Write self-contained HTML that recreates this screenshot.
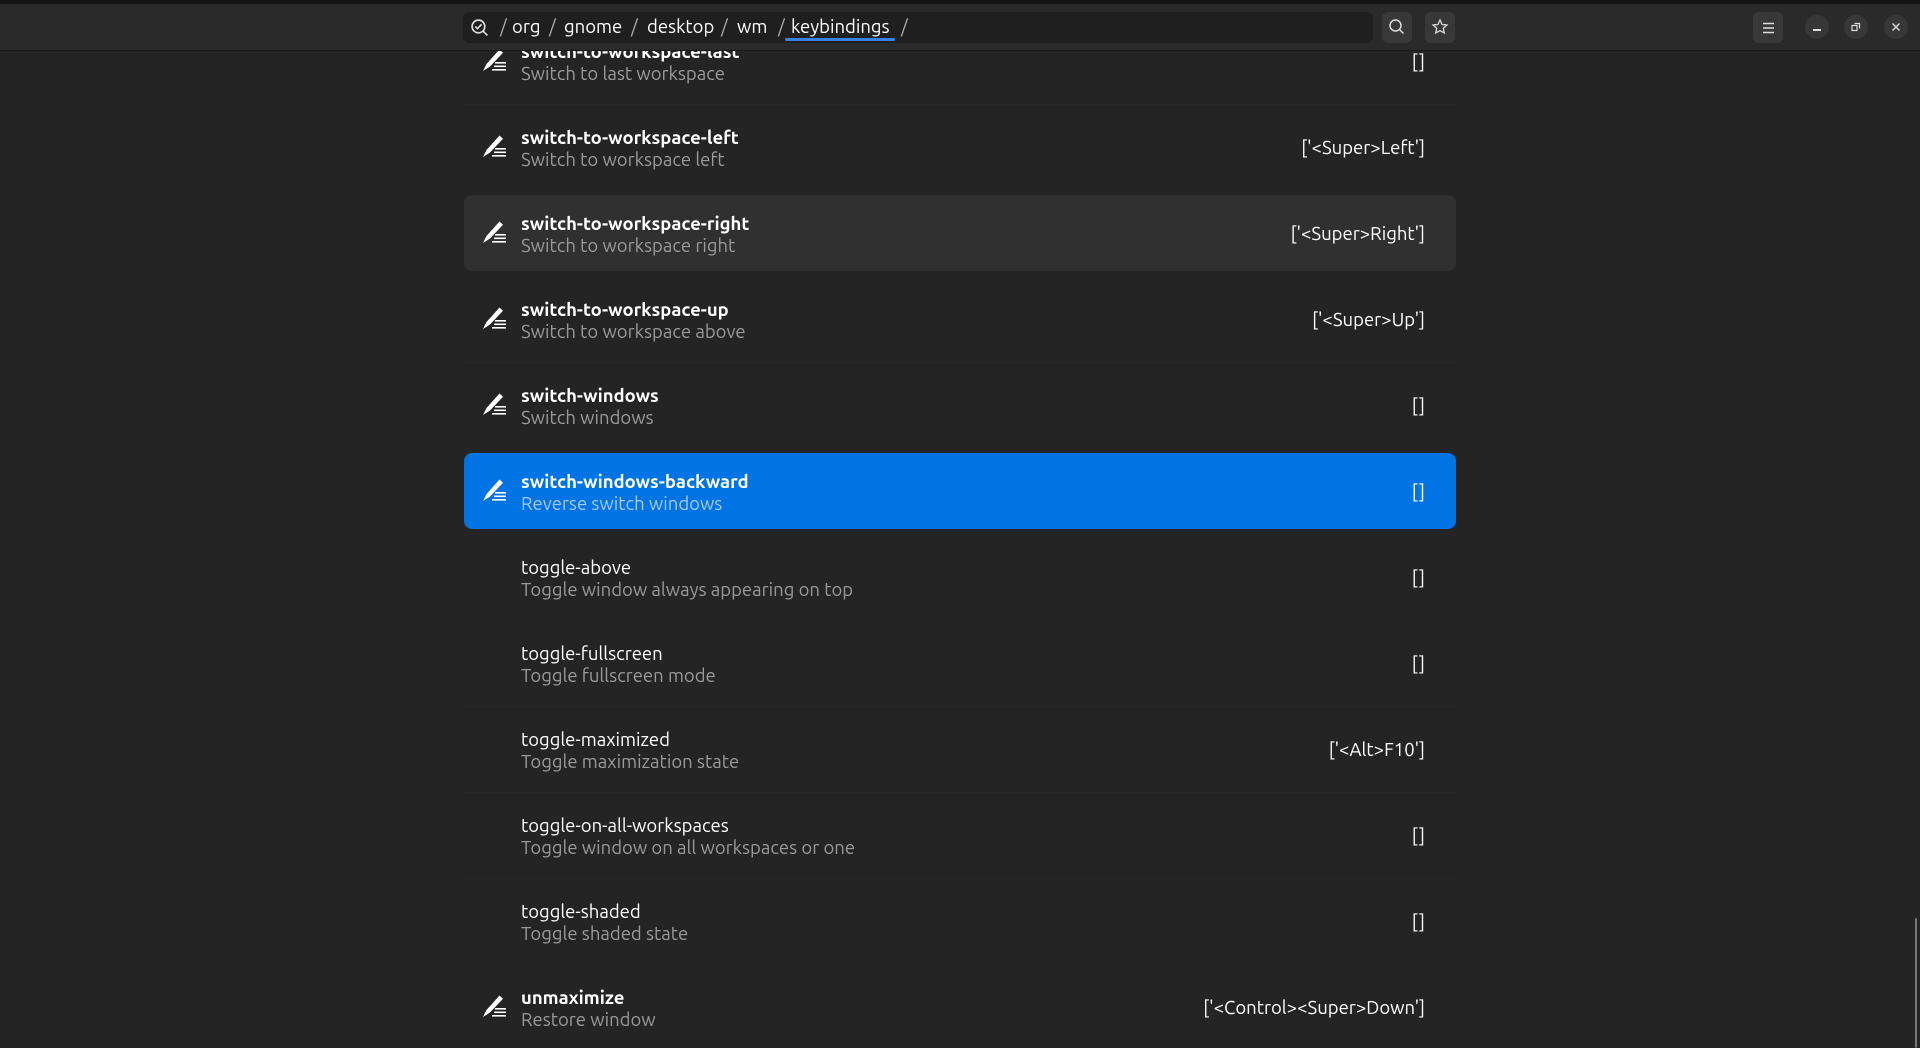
<!DOCTYPE html>
<html><head><meta charset="utf-8"><style>
*{margin:0;padding:0;box-sizing:border-box}
body{width:1920px;height:1048px;background:#242424;font-family:"Ubuntu","Liberation Sans",sans-serif;color:#fff;overflow:hidden;position:relative}
.top{position:absolute;left:0;top:0;width:1920px;height:4px;background:#131313}
.hdr{position:absolute;left:0;top:4px;width:1920px;height:47px;background:#2a2a2a;border-bottom:1px solid #1a1a1a;z-index:5}
.entry{position:absolute;left:463px;top:8px;width:910px;height:31px;background:#1f1f1f;border-radius:6px;font-size:18.5px;color:#fff;line-height:31px}
.entry span{position:absolute;top:0}
.sl{color:#aaa}
.ul{position:absolute;background:#3584e4;border-radius:2px}
.btn{position:absolute;top:8px;width:30px;height:31px;background:#383838;border-radius:6px}
.cb{position:absolute;top:11px;width:24px;height:24px;background:#373737;border-radius:50%}
.row{position:absolute;left:464px;width:992px;height:76px;border-radius:8px}
.sep{position:absolute;left:464px;width:992px;height:1px;background:#282828}
.t,.s,.v{position:absolute;font-size:18.5px;line-height:22px;white-space:nowrap}
.t{left:57px}
.s{left:57px;color:#9a9a9a}
.v{right:31px}
.ic{position:absolute;left:18px}
b{font-weight:bold}
</style></head><body>
<div class="top"></div>
<div class="hdr">
 <div class="entry">
  <svg style="position:absolute;left:7px;top:6px" width="19" height="19" viewBox="0 0 18 18" fill="none" stroke="#ddd" stroke-width="1.6"><circle cx="8" cy="8" r="6"/><path d="M5 8l2 2 4-4M12.5 12.5l4 4"/></svg>
  <span class="sl" style="left:37px">/</span>
  <span style="left:49px">org</span>
  <span class="sl" style="left:86px">/</span>
  <span style="left:101px">gnome</span>
  <span class="sl" style="left:168px">/</span>
  <span style="left:184px">desktop</span>
  <span class="sl" style="left:258px">/</span>
  <span style="left:274px">wm</span>
  <span class="sl" style="left:315px">/</span>
  <span style="left:328px">keybindings</span>
  <span class="sl" style="left:438px">/</span>
 </div>
 <div class="ul" style="left:785px;top:34px;width:110px;height:3px"></div>
 <div class="btn" style="left:1382px"><svg style="position:absolute;left:6px;top:6px" width="18" height="18" viewBox="0 0 18 18" fill="none" stroke="#ddd" stroke-width="1.5"><circle cx="7.5" cy="7.5" r="5.5"/><path d="M11.5 11.5l4 4"/></svg></div>
 <div class="btn" style="left:1425px"><svg style="position:absolute;left:6px;top:6px" width="18" height="18" viewBox="0 0 18 18" fill="none" stroke="#ddd" stroke-width="1.3"><path d="M9 2l2.1 4.5 4.8.5-3.6 3.2 1 4.8L9 12.6 4.7 15l1-4.8L2.1 7l4.8-.5z"/></svg></div>
 <div class="btn" style="left:1753px"><svg style="position:absolute;left:9px;top:10px" width="13" height="12" viewBox="0 0 13 12" stroke="#ddd" stroke-width="1.4"><path d="M1 1.5h11M1 6h11M1 10.5h11"/></svg></div>
 <div class="cb" style="left:1805px"><div style="position:absolute;left:8px;top:14px;width:8px;height:1.5px;background:#ddd"></div></div>
 <div class="cb" style="left:1844px"><svg style="position:absolute;left:7px;top:7px" width="10" height="10" viewBox="0 0 10 10" fill="none" stroke="#ddd" stroke-width="1.2"><rect x="1" y="3.5" width="5" height="5"/><path d="M3.5 1.5h5v5"/></svg></div>
 <div class="cb" style="left:1884px"><svg style="position:absolute;left:7px;top:7px" width="10" height="10" viewBox="0 0 10 10" stroke="#ddd" stroke-width="1.4"><path d="M1.5 1.5l7 7M8.5 1.5l-7 7"/></svg></div>
</div>

<svg width="0" height="0" style="position:absolute"><defs><symbol id="pen" viewBox="0 0 24 23"><path d="M17.5 0.5l3.5 3.2L8 17.5 1 22l3.5-7z" fill="#fff"/><rect x="13" y="13" width="11" height="1.6" fill="#fff"/><rect x="12" y="16.5" width="12" height="1.6" fill="#fff"/><rect x="10" y="20" width="14" height="1.6" fill="#fff"/></symbol></defs></svg>

<div id="rows"></div>
<div style="position:absolute;left:1915px;top:918px;width:2px;height:130px;background:#777;border-radius:1px"></div>
<script>
var data=[
["switch-to-workspace-last","Switch to last workspace","[]",1],
["switch-to-workspace-left","Switch to workspace left","['&lt;Super&gt;Left']",1],
["switch-to-workspace-right","Switch to workspace right","['&lt;Super&gt;Right']",1],
["switch-to-workspace-up","Switch to workspace above","['&lt;Super&gt;Up']",1],
["switch-windows","Switch windows","[]",1],
["switch-windows-backward","Reverse switch windows","[]",1],
["toggle-above","Toggle window always appearing on top","[]",0],
["toggle-fullscreen","Toggle fullscreen mode","[]",0],
["toggle-maximized","Toggle maximization state","['&lt;Alt&gt;F10']",0],
["toggle-on-all-workspaces","Toggle window on all workspaces or one","[]",0],
["toggle-shaded","Toggle shaded state","[]",0],
["unmaximize","Restore window","['&lt;Control&gt;&lt;Super&gt;Down']",1]];
var h="";
data.forEach(function(d,i){
 var c=491+(i-5)*86, top=c-38;
 var bg=i==5?"#0073e5":(i==2?"#303030":"transparent");
 var sc=i==5?"#a9c9f2":"#9a9a9a";
 if(i>0 && i!=2 && i!=3 && i!=5 && i!=6) h+='<div class="sep" style="top:'+(c-43)+'px"></div>';
 h+='<div class="row" style="top:'+top+'px;background:'+bg+'">';
 if(d[3]) h+='<svg class="ic" style="top:26px" width="24" height="23"><use href="#pen"/></svg>';
 h+='<div class="t" style="top:18px">'+(d[3]?'<b>'+d[0]+'</b>':d[0])+'</div>';
 h+='<div class="s" style="top:40px;color:'+sc+'">'+d[1]+'</div>';
 h+='<div class="v" style="top:28px">'+d[2]+'</div></div>';
});
document.getElementById("rows").innerHTML=h;
</script>
</body></html>
